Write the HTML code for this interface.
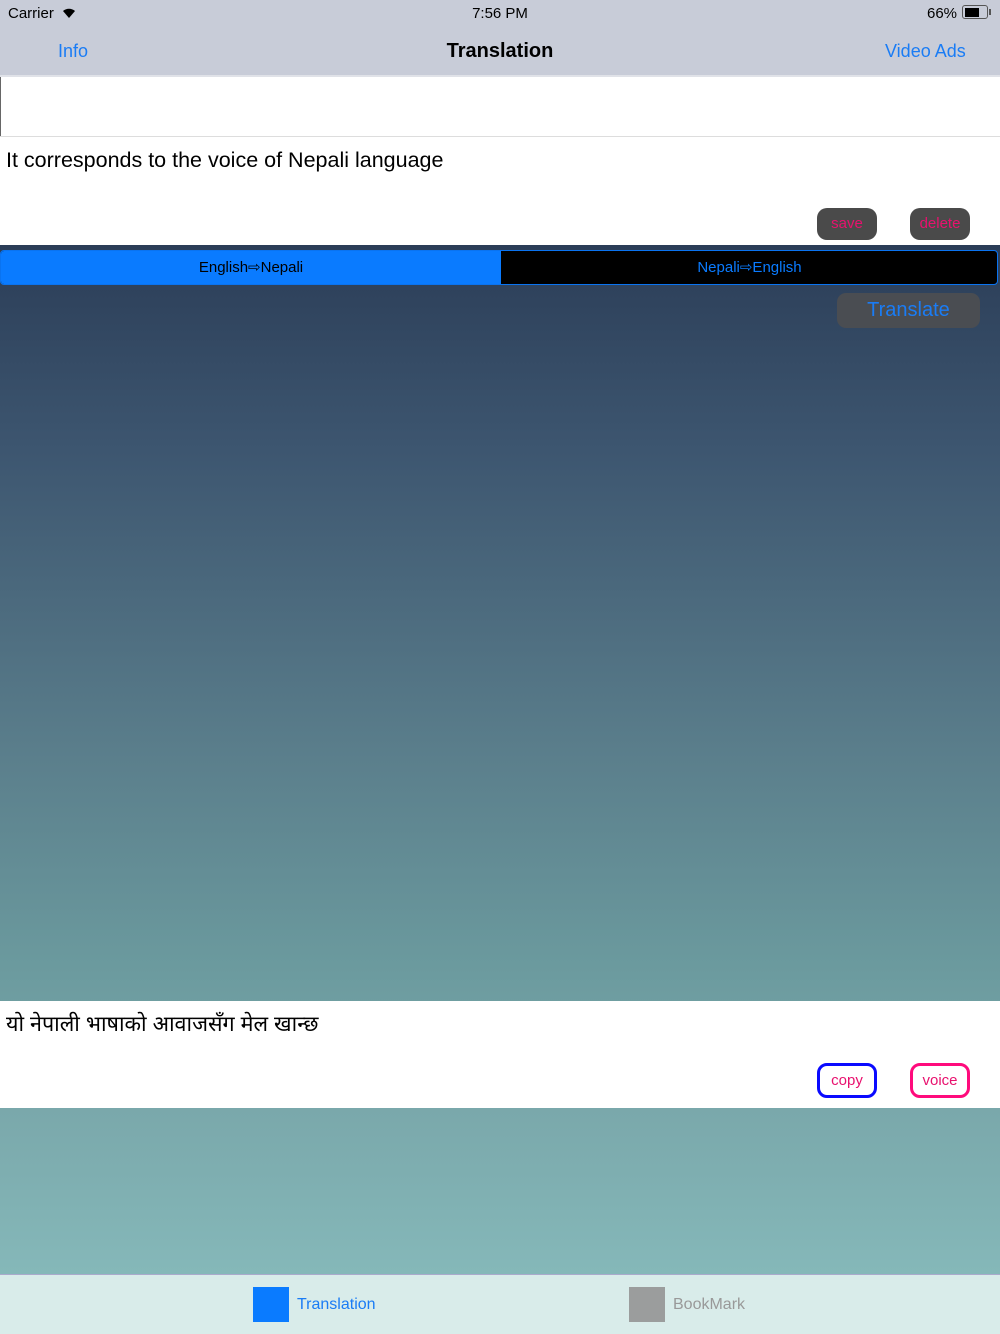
<!DOCTYPE html>
<html><head><meta charset="utf-8"><style>
*{margin:0;padding:0;box-sizing:border-box}
body{width:1000px;height:1334px;position:relative;overflow:hidden;font-family:"Liberation Sans",sans-serif;background:#fff}
.abs{position:absolute}
</style></head><body>
<div class="abs" style="left:0;top:0;width:1000px;height:75px;background:#c8ccd8"></div>
<div class="abs" style="left:8px;top:5px;font-size:15px;color:#000">Carrier</div>
<svg class="abs" style="left:60px;top:5px" width="18" height="14" viewBox="0 0 18 14"><path d="M9 13 L3 6 A9 9 0 0 1 15 6 Z" fill="#000"/></svg>
<div class="abs" style="left:0;width:1000px;top:5px;text-align:center;font-size:15px">7:56 PM</div>
<div class="abs" style="left:927px;top:5px;font-size:15px">66%</div>
<div class="abs" style="left:962px;top:5px;width:26px;height:14px;border:1.5px solid #555;border-radius:3px;padding:1.5px"><div style="width:14px;height:100%;background:#000"></div></div>
<div class="abs" style="left:989px;top:9px;width:2px;height:6px;background:#555"></div>
<div class="abs" style="left:58px;top:41px;font-size:18px;color:#1a7cf5">Info</div>
<div class="abs" style="left:0;width:1000px;top:40px;text-align:center;font-size:20px;font-weight:bold;color:#000">Translation</div>
<div class="abs" style="left:885px;top:41px;font-size:18px;color:#1a7cf5">Video Ads</div>
<div class="abs" style="left:0;top:75px;width:1000px;height:2px;background:#e0e2e8"></div>
<div class="abs" style="left:0;top:77px;width:1px;height:60px;background:#666"></div>
<div class="abs" style="left:0;top:136px;width:1000px;height:1px;background:#ddd"></div>
<div class="abs" style="left:6px;top:148px;font-size:21.5px;color:#000">It corresponds to the voice of Nepali language</div>
<div class="abs" style="left:817px;top:208px;width:60px;height:32px;border-radius:10px;background:#4a4a4a;color:#e8116e;font-size:15px;text-align:center;line-height:32px">save</div>
<div class="abs" style="left:910px;top:208px;width:60px;height:32px;border-radius:10px;background:#4a4a4a;color:#e8116e;font-size:15px;text-align:center;line-height:32px">delete</div>
<div class="abs" style="left:0;top:245px;width:1000px;height:1029px;background:linear-gradient(#2b3d57,#3d5670 20%,#5b7f8c 50%,#6b9a9e 70%,#7aa8ab 84%,#85b8b9)"></div>
<div class="abs" style="left:0;top:250px;width:998px;height:35px;border:1.5px solid #0a73f0;border-radius:4px;background:#000;overflow:hidden">
<div style="position:absolute;left:0;top:0;width:500px;height:100%;background:#0a7bff;color:#000;font-size:15px;text-align:center;line-height:33px">English⇨Nepali</div>
<div style="position:absolute;left:500px;top:0;width:497px;height:100%;color:#0a7bff;font-size:15px;text-align:center;line-height:33px">Nepali⇨English</div>
</div>
<div class="abs" style="left:837px;top:293px;width:143px;height:35px;border-radius:9px;background:#4a4d52;color:#1a7cf5;font-size:20px;text-align:center;line-height:35px">Translate</div>
<div class="abs" style="left:0;top:1001px;width:1000px;height:107px;background:#fff"></div>
<div class="abs" style="left:6px;top:1009px;font-size:21.5px;color:#000;font-family:'Liberation Sans','Noto Sans CJK SC',sans-serif">यो नेपाली भाषाको आवाजसँग मेल खान्छ</div>
<div class="abs" style="left:817px;top:1063px;width:60px;height:35px;border-radius:10px;border:3px solid #0a0aff;color:#e8116e;font-size:15px;text-align:center;line-height:30px">copy</div>
<div class="abs" style="left:910px;top:1063px;width:60px;height:35px;border-radius:10px;border:3px solid #ff0a7c;color:#e8116e;font-size:15px;text-align:center;line-height:30px">voice</div>
<div class="abs" style="left:0;top:1274px;width:1000px;height:60px;background:#d9ecea;border-top:1px solid #aac"></div>
<div class="abs" style="left:253px;top:1287px;width:36px;height:35px;background:#0a7bff"></div>
<div class="abs" style="left:297px;top:1296px;font-size:16px;color:#1a7cf5">Translation</div>
<div class="abs" style="left:629px;top:1287px;width:36px;height:35px;background:#9b9d9d"></div>
<div class="abs" style="left:673px;top:1296px;font-size:16px;color:#999">BookMark</div>
</body></html>
